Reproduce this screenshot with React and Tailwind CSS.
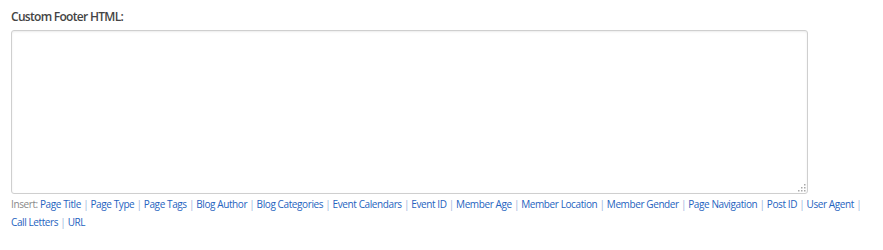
const links = [
  "Page Title",
  "Page Type",
  "Page Tags",
  "Blog Author",
  "Blog Categories",
  "Event Calendars",
  "Event ID",
  "Member Age",
  "Member Location",
  "Member Gender",
  "Page Navigation",
  "Post ID",
  "User Agent",
  "Call Letters",
  "URL",
];

function Grip() {
  // dotted resize handle in the corner
  const dots = [
    [6, 0],
    [3, 3],
    [6, 3],
    [0, 6],
    [3, 6],
    [6, 6],
  ];
  return (
    <svg className="absolute right-[2px] bottom-[2px]" width="8" height="8" viewBox="0 0 8 8">
      {dots.map(([x, y]) => (
        <rect key={`${x}-${y}`} x={x} y={y} width="1.5" height="1.5" fill="#a8a8a8" />
      ))}
    </svg>
  );
}

export default function App() {
  return (
    <div
      className="bg-white w-[883px] h-[250px] pl-[11px] pt-[8px]"
      style={{ fontFamily: '"Open Sans", sans-serif' }}
    >
      <div className="w-[852px]">
        <label className="block text-[12px] font-semibold tracking-[-0.7px] text-[#444] leading-[18px]">
          Custom Footer HTML:
        </label>
        <div className="relative mt-[4px] w-[797px] h-[164px]">
          <textarea className="block w-full h-full resize-none border border-[#cfcfcf] rounded-[3px] bg-white shadow-[inset_0_1px_2px_rgba(0,0,0,0.08)] outline-none" />
          <Grip />
        </div>
        <div className="mt-[1px] text-[10px] tracking-[-0.4px] leading-[18px] text-[#888]">
          Insert:{" "}
          {links.map((l, i) => (
            <span key={l}>
              <a href="#" className="whitespace-nowrap text-[#2563c0]">
                {l}
              </a>
              {i < links.length - 1 && <span className="text-[#9ab4db]"> | </span>}
            </span>
          ))}
        </div>
      </div>
    </div>
  );
}
